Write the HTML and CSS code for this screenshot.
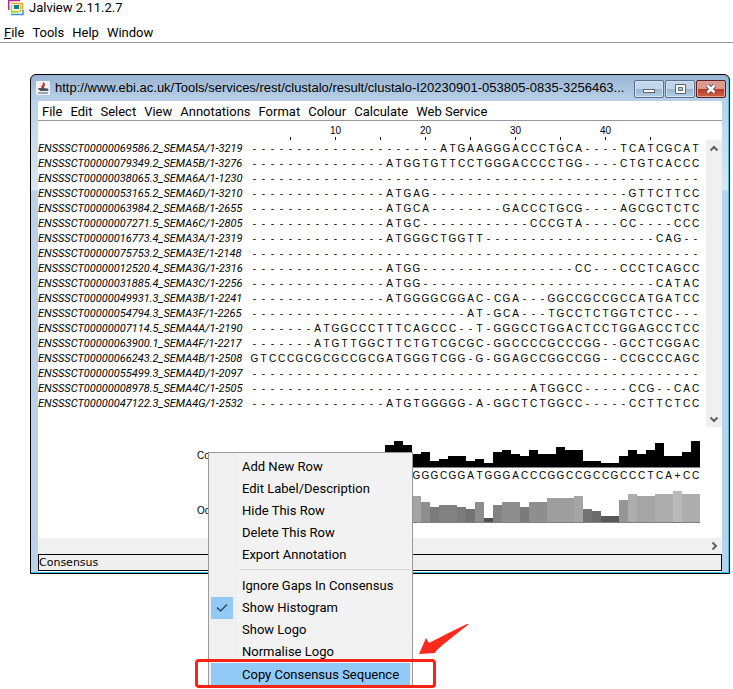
FILE: index.html
```html
<!DOCTYPE html>
<html lang="en">
<head>
<meta charset="utf-8">
<title>Jalview 2.11.2.7</title>
<link rel="stylesheet" href="styles.css">
</head>
<body>
<header class="app-title">
  <svg class="app-logo" viewBox="0 0 16 16" aria-hidden="true">
    <path d="M0.750 10V0.500H12" fill="none" stroke="#b5258a" stroke-width="1.500"/>
    <path d="M3 3.500H14.500V9.500" fill="none" stroke="#f39a1e" stroke-width="1.500"/>
    <path d="M3.500 5V12H10" fill="none" stroke="#a6d82a" stroke-width="1.500"/>
    <path d="M3 14.500H15V10" fill="none" stroke="#3f8fd0" stroke-width="1.500"/>
    <path d="M5 5.500H12.500V11.500H5" fill="none" stroke="#f0b428"/>
    <path d="M4 11.500H12" fill="none" stroke="#a6d82a" stroke-width="1.500"/>
    <rect x="6" y="5" width="5" height="4" fill="#0c7f8c"/>
  </svg>
  <span>Jalview 2.11.2.7</span>
</header>
<nav class="menubar app-menu">
  <button><u>F</u>ile</button><button>Tools</button><button>Help</button><button>Window</button>
</nav>
<main class="desktop">
  <section class="frame">
    <header class="frame-title">
      <svg class="java-icon" viewBox="0 0 14 14" aria-hidden="true">
        <rect width="14" height="14" rx="1" fill="#f2f2f2"/>
        <path d="M2.500 7.500H9.500V9.500H4ZM10 8H12V9.500H10M2 12H12" fill="#456" stroke="#456" stroke-width="1"/>
        <path d="M7 2Q9 4 7 5T8 7" fill="none" stroke="#d02020" stroke-width="2"/>
      </svg>
      <h1>http://www.ebi.ac.uk/Tools/services/rest/clustalo/result/clustalo-I20230901-053805-0835-3256463...</h1>
      <div class="window-buttons">
        <button aria-label="Minimise"><svg viewBox="0 0 28 16"><rect x="8.500" y="8.500" width="11" height="3" fill="#fff" stroke="#596573"/></svg></button>
        <button aria-label="Maximise"><svg viewBox="0 0 28 16"><path d="M9.500 3.500H19.500V12.500H9.500ZM12.500 6.500H16.500V9.500H12.500Z" fill="#fff" fill-rule="evenodd" stroke="#596573"/></svg></button>
        <button class="close" aria-label="Close"><svg viewBox="0 0 28 16"><path d="M10.500 4.500L17.500 11.500M17.500 4.500L10.500 11.500" stroke="#5a4a52" stroke-width="4.500"/><path d="M10.500 4.500L17.500 11.500M17.500 4.500L10.500 11.500" stroke="#fff" stroke-width="2.500"/></svg></button>
      </div>
    </header>
    <div class="frame-body">
      <nav class="menubar frame-menu">
        <button>File</button><button>Edit</button><button>Select</button><button>View</button><button>Annotations</button><button>Format</button><button>Colour</button><button>Calculate</button><button>Web Service</button>
      </nav>
      <div class="scale" id="scale"></div>
      <div class="alignment">
        <table class="sequences"><tbody id="sequences"></tbody></table>
        <div class="vscroll">
          <button aria-label="Scroll up"><svg viewBox="0 0 16 16"><path d="M4.500 10.500L8 7L11.500 10.500" /></svg></button>
          <button aria-label="Scroll down"><svg viewBox="0 0 16 16"><path d="M4.500 6.500L8 10L11.500 6.500" /></svg></button>
        </div>
      </div>
      <div class="annotations">
        <div class="track">
          <span class="track-label">Consensus</span>
          <div class="track-plot">
            <div class="bars" id="consensus-bars"></div>
            <div class="letters" id="consensus-letters"></div>
          </div>
        </div>
        <div class="track">
          <span class="track-label">Occupancy</span>
          <div class="track-plot">
            <div class="bars" id="occupancy-bars"></div>
          </div>
        </div>
      </div>
      <div class="hscroll">
        <button aria-label="Scroll right"><svg viewBox="0 0 16 16"><path d="M6.500 4.500L10 8L6.500 11.500" /></svg></button>
      </div>
      <footer class="status">Consensus</footer>
    </div>

    <div class="popup">
      <button class="item">Add New Row</button>
      <button class="item">Edit Label/Description</button>
      <button class="item">Hide This Row</button>
      <button class="item">Delete This Row</button>
      <button class="item">Export Annotation</button>
      <hr>
      <label class="item"><input type="checkbox">Ignore Gaps In Consensus</label>
      <label class="item"><input type="checkbox" checked><svg class="tick" viewBox="0 0 22 22"><path d="M6 10.500L9.500 14L16 7.500" /></svg>Show Histogram</label>
      <label class="item"><input type="checkbox">Show Logo</label>
      <label class="item"><input type="checkbox">Normalise Logo</label>
      <button class="item selected">Copy Consensus Sequence</button>
    </div>
    <div class="callout"></div>
    <svg class="arrow" viewBox="0 0 52 34" aria-hidden="true"><path d="M51 0L27 19Q21 24 18 27L17 29L1 30L8 14L11 19Q30 9 49 0Z" fill="#fb2a1c"/></svg>
  </section>
</main>
<script src="alignment.js"></script>
</body>
</html>
```
FILE: styles.css
```css
* { box-sizing: border-box; }
body {
  margin: 0;
  min-height: 100vh;
  overflow: hidden;
  background: #fff;
  color: #000;
  font: 13px/16px Roboto, sans-serif;
}
button {
  margin: 0;
  padding: 0;
  border: 0;
  background: none;
  color: inherit;
  font: inherit;
}
svg { display: block; }

.app-title { display: flex; gap: 5px; height: 22px; padding-left: 8px; }
.app-logo { width: 16px; height: 16px; }
.menubar { display: flex; gap: 8px; border-bottom: 1px solid #999; }
.app-menu { height: 21px; padding: 2px 4px 0; }
.desktop { padding: 31px 3px 0 30px; }

.frame {
  position: relative;
  border: 1px solid #000;
  border-radius: 6px 6px 0 0;
  padding: 0 7px 1px;
  background: linear-gradient(#9ab5d2, #b9d1ea 26px, #dae7f5 115px, #bad1e9 116px);
  box-shadow: inset -1px -1px #2fc8e8;
}
.frame-title { display: flex; align-items: center; height: 26px; margin: 0 -4px 0 -2px; }
.java-icon { width: 14px; height: 14px; margin-right: 5px; flex: none; }
.frame-title h1 {
  flex: 1;
  min-width: 0;
  margin: 0;
  overflow: hidden;
  white-space: nowrap;
  font-family: "Liberation Sans", sans-serif;
  font-size: 13px;
  font-weight: 400;
}
.window-buttons { display: flex; gap: 1px; margin-top: 2px; }
.window-buttons button {
  width: 30px;
  height: 18px;
  border: 1px solid #57708c;
  border-radius: 2px;
  background: linear-gradient(#c2d5e8 50%, #9ab4d0 50%, #b4cde6);
  box-shadow: inset 0 0 0 1px #d5e4f2;
}
.window-buttons .close {
  border-color: #58202a;
  background: linear-gradient(#dc9a8c 50%, #b83a26 50%, #cf6348);
  box-shadow: inset 0 0 0 1px #e0a598;
}

.frame-body { background: #fff; padding-bottom: 1px; }
.frame-menu { height: 20px; padding: 2px 4px 0; }
.scale {
  display: grid;
  grid-template-columns: repeat(50, 9px);
  height: 19px;
  padding: 3px 0 0 212px;
  font: 10px/13px "Liberation Sans", sans-serif;
}
.mark { display: flex; flex-direction: column; align-items: center; justify-content: flex-end; height: 16px; }
.mark::after { content: ""; flex: none; width: 1px; height: 3px; background: #000; }

.alignment { display: flex; justify-content: space-between; height: 287px; }
.sequences {
  align-self: flex-start;
  table-layout: fixed;
  border-collapse: collapse;
  width: 662px;
  margin-top: 1px;
  font: 10px/15px "Liberation Sans", sans-serif;
}
.sequences th {
  width: 212px;
  padding: 0;
  text-align: left;
  font-family: Roboto, sans-serif;
  font-size: 11px;
  font-weight: 400;
  font-style: italic;
  white-space: nowrap;
}
.sequences td { padding: 0; text-align: center; height: 15px; }
.vscroll {
  display: flex;
  flex-direction: column;
  justify-content: space-between;
  width: 16px;
  background: #f0f0f0;
}
.vscroll button, .hscroll button { width: 16px; height: 16px; }
.vscroll path, .hscroll path { fill: none; stroke: #606060; stroke-width: 2; }

.annotations {
  height: 111px;
  padding-top: 9px;
  font: 10px/15px "Liberation Sans", sans-serif;
}
.track { display: flex; height: 55px; }
.track-label { width: 209px; margin-right: 3px; padding-top: 12px; text-align: right; }
.track-plot { flex: 1; }
.bars {
  display: grid;
  grid-template-columns: repeat(50, 9px);
  align-items: end;
  width: 450px;
  height: 32px;
  border-bottom: 1px solid #808080;
}
.letters { display: grid; grid-template-columns: repeat(50, 9px); text-align: center; }
.hscroll { display: flex; justify-content: flex-end; height: 16px; background: #f0f0f0; }
.status {
  height: 17px;
  border: 1px solid #000;
  background: #efefef;
  font: 11px/15px "DejaVu Sans", sans-serif;
}

.popup {
  position: absolute;
  left: 177px;
  top: 377px;
  width: 205px;
  padding: 2px;
  border: 1px solid #999;
  background: linear-gradient(90deg, #f0f0f0 28px, #f2f2f2 28px);
}
.item {
  position: relative;
  display: block;
  width: 100%;
  height: 22px;
  padding-left: 31px;
  text-align: left;
  line-height: 21px;
  white-space: nowrap;
}
.item input { position: absolute; left: 0; top: 0; width: 22px; height: 22px; margin: 0; appearance: none; }
.item input:checked { background: #91c9f7; }
.tick { position: absolute; left: 0; top: 0; width: 22px; height: 22px; }
.tick path { fill: none; stroke: #33475a; stroke-width: 1.5; }
.popup hr { height: 1px; margin: 4px 0 5px 28px; border: 0; background: #d6d6d6; }
.selected { background: #91c9f7; }
.callout {
  position: absolute;
  left: 164px;
  top: 584px;
  width: 241px;
  height: 29px;
  border: 3px solid #fb2316;
  border-radius: 4px;
}
.arrow { position: absolute; left: 387px; top: 549px; width: 52px; height: 34px; }
```
FILE: alignment.js
```js
const gap = n => "-".repeat(n);
const sequences = [
  ["ENSSSCT00000069586.2_SEMA5A/1-3219", gap(21) + "ATGAAGGGACCCTGCA----TCATCGCAT"],
  ["ENSSSCT00000079349.2_SEMA5B/1-3276", gap(15) + "ATGGTGTTCCTGGGACCCCTGG----CTGTCACCC"],
  ["ENSSSCT00000038065.3_SEMA6A/1-1230", gap(50)],
  ["ENSSSCT00000053165.2_SEMA6D/1-3210", gap(15) + "ATGAG" + gap(22) + "GTTCTTCC"],
  ["ENSSSCT00000063984.2_SEMA6B/1-2655", gap(15) + "ATGCA" + gap(8) + "GACCCTGCG----AGCGCTCTC"],
  ["ENSSSCT00000007271.5_SEMA6C/1-2805", gap(15) + "ATGC" + gap(12) + "CCCGTA----CC----CCC"],
  ["ENSSSCT00000016773.4_SEMA3A/1-2319", gap(15) + "ATGGGCTGGTT" + gap(19) + "CAG--"],
  ["ENSSSCT00000075753.2_SEMA3E/1-2148", gap(50)],
  ["ENSSSCT00000012520.4_SEMA3G/1-2316", gap(15) + "ATGG" + gap(17) + "CC---CCCTCAGCC"],
  ["ENSSSCT00000031885.4_SEMA3C/1-2256", gap(15) + "ATGG" + gap(26) + "CATAC"],
  ["ENSSSCT00000049931.3_SEMA3B/1-2241", gap(15) + "ATGGGGCGGAC-CGA---GGCCGCCGCCATGATCC"],
  ["ENSSSCT00000054794.3_SEMA3F/1-2265", gap(24) + "AT-GCA---TGCCTCTGGTCTCC---"],
  ["ENSSSCT00000007114.5_SEMA4A/1-2190", gap(7) + "ATGGCCCTTTCAGCCC--T-GGGCCTGGACTCCTGGAGCCTCC"],
  ["ENSSSCT00000063900.1_SEMA4F/1-2217", gap(7) + "ATGTTGGCTTCTGTCGCGC-GGCCCCGCCCGG--GCCTCGGAC"],
  ["ENSSSCT00000066243.2_SEMA4B/1-2508", "GTCCCGCGCGCCGCGATGGGTCGG-G-GGAGCCGGCCGG--CCGCCCAGC"],
  ["ENSSSCT00000055499.3_SEMA4D/1-2097", gap(50)],
  ["ENSSSCT00000008978.5_SEMA4C/1-2505", gap(31) + "ATGGCC-----CCG--CAC"],
  ["ENSSSCT00000047122.3_SEMA4G/1-2532", gap(15) + "ATGTGGGGG-A-GGCTCTGGCC-----CCTTCTCC"]
];
const consensus = " ".repeat(15) + "ATGGGGCGGATGGGACCCGGCCGCCGCCCTCA+CC";
const conservation = [22,26,22,13,15,6,8,11,11,6,8,4,15,17,13,11,17,13,13,20,17,17,6,6,4,4,11,17,13,17,24,11,11,15,26];
const occupancy = [26,26,26,26,20,15,17,17,15,13,20,4,17,20,20,15,20,20,24,24,24,26,13,11,6,6,22,28,26,26,28,28,31,28,28];
const firstColumn = 15;

const byId = id => document.getElementById(id);
const cells = (text, tag) => [...text].map(c => `<${tag}>${c}</${tag}>`).join("");

byId("sequences").innerHTML = sequences
  .map(([name, bases]) => `<tr><th scope="row">${name}</th>${cells(bases, "td")}</tr>`)
  .join("");

byId("scale").innerHTML = [5, 10, 15, 20, 25, 30, 35, 40, 45]
  .map(n => `<span class="mark" style="grid-column:${n}">${n % 10 ? "" : n}</span>`)
  .join("");

const bars = (heights, colour) => heights
  .map((h, i) => `<i style="grid-column:${firstColumn + i + 1};height:${h}px;background:${colour(h)}"></i>`)
  .join("");
byId("consensus-bars").innerHTML = bars(conservation, () => "#000");
byId("occupancy-bars").innerHTML = bars(occupancy, h => {
  const v = Math.round(64 + h * 3.9);
  return `rgb(${v},${v},${v})`;
});
byId("consensus-letters").innerHTML = cells(consensus, "span");
```
